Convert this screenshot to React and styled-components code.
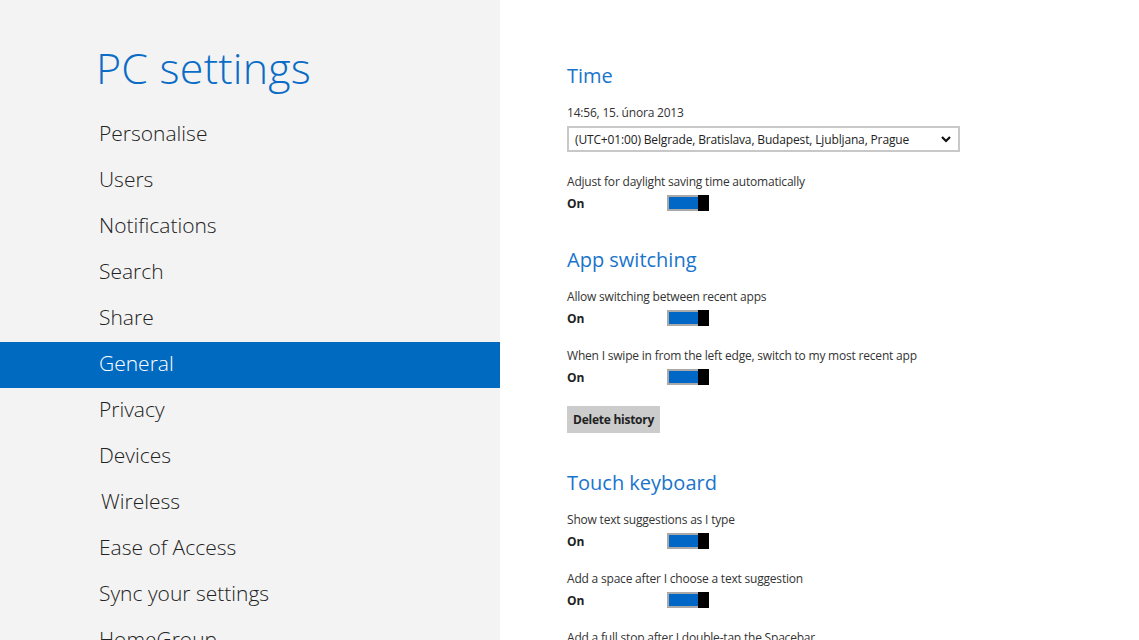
import React from "react";
import styled, { createGlobalStyle } from "styled-components";

const Global = createGlobalStyle`
  html, body {
    margin: 0;
    padding: 0;
    height: 100%;
    overflow: hidden;
  }
  body {
    font-family: "Open Sans", "Noto Sans", "Liberation Sans", sans-serif;
    background: #ffffff;
  }
`;

const Page = styled.div`
  display: flex;
  width: 1139px;
  height: 640px;
  overflow: hidden;
`;

const Side = styled.nav`
  width: 500px;
  flex-shrink: 0;
  background: #f3f3f3;
  display: flex;
  flex-direction: column;
  padding-top: 36px;
`;

const Title = styled.h1`
  margin: 0 0 12px 96px;
  font-size: 43px;
  font-weight: 300;
  color: #0a6cc6;
  line-height: 64px;
  letter-spacing: 0.2px;
`;

const NavItem = styled.div`
  height: 46px;
  box-sizing: border-box;
  display: flex;
  align-items: center;
  padding-left: ${p => p.$indent || 99}px;
  padding-bottom: 4px;
  font-size: 21px;
  font-weight: 300;
  color: ${p => (p.$active ? "#ffffff" : "#222222")};
  background: ${p => (p.$active ? "#006ac1" : "transparent")};
  flex-shrink: 0;
`;

const Main = styled.main`
  flex: 1;
  padding: 61px 0 0 67px;
  display: flex;
  flex-direction: column;
`;

const Section = styled.section`
  display: flex;
  flex-direction: column;
  margin-bottom: ${p => p.$gap || 0}px;
`;

const Heading = styled.h2`
  margin: 0 0 14px;
  font-size: 20px;
  font-weight: 400;
  color: #1a74cc;
  line-height: 30px;
`;

const Label = styled.div`
  font-size: 12px;
  letter-spacing: -0.2px;
  color: #333333;
  line-height: 16px;
  margin-bottom: ${p => p.$mb || 0}px;
`;

const Select = styled.div`
  width: 393px;
  height: 26px;
  box-sizing: border-box;
  border: 2px solid #c8c8c8;
  display: flex;
  align-items: center;
  justify-content: space-between;
  padding: 0 6px 0 6px;
  font-size: 12px;
  letter-spacing: -0.15px;
  color: #222222;
  margin-bottom: 22px;
`;

const ToggleRow = styled.div`
  display: flex;
  align-items: center;
  height: 18px;
  margin-top: 4px;
  margin-bottom: ${p => p.$mb || 0}px;
`;

const State = styled.span`
  width: 100px;
  font-size: 12px;
  font-weight: 700;
  color: #222222;
`;

const Toggle = styled.div`
  width: 42px;
  height: 16px;
  box-sizing: border-box;
  display: flex;
  background: #000000;
`;

const Track = styled.div`
  flex: 1;
  border: 2px solid #a9a9a9;
  border-right: none;
  background: #0067c6;
`;

const Thumb = styled.div`
  width: 11px;
  background: #000000;
`;

const Button = styled.button`
  align-self: flex-start;
  height: 27px;
  padding: 0 6px;
  border: none;
  background: #cccccc;
  font-family: inherit;
  font-size: 12px;
  letter-spacing: -0.25px;
  font-weight: 700;
  color: #222222;
`;

const Chevron = () => (
  <svg width="12" height="10" viewBox="0 0 12 10">
    <path d="M2 3 L6 7 L10 3" fill="none" stroke="#111" strokeWidth="2.2" />
  </svg>
);

const Switch = ({ mb }) => (
  <ToggleRow $mb={mb}>
    <State>On</State>
    <Toggle>
      <Track />
      <Thumb />
    </Toggle>
  </ToggleRow>
);

const navItems = [
  "Personalise",
  "Users",
  "Notifications",
  "Search",
  "Share",
  "General",
  "Privacy",
  "Devices",
  "Wireless",
  "Ease of Access",
  "Sync your settings",
  "HomeGroup",
];

export default function App() {
  return (
    <Page>
      <Global />
      <Side>
        <Title>PC settings</Title>
        {navItems.map(n => (
          <NavItem key={n} $active={n === "General"} $indent={n === "Wireless" ? 101 : 99}>
            {n}
          </NavItem>
        ))}
      </Side>
      <Main>
        <Section $gap={33}>
          <Heading>Time</Heading>
          <Label $mb={5}>14:56, 15. února 2013</Label>
          <Select>
            <span>(UTC+01:00) Belgrade, Bratislava, Budapest, Ljubljana, Prague</span>
            <Chevron />
          </Select>
          <Label>Adjust for daylight saving time automatically</Label>
          <Switch />
        </Section>
        <Section $gap={35}>
          <Heading>App switching</Heading>
          <Label>Allow switching between recent apps</Label>
          <Switch mb={21} />
          <Label>When I swipe in from the left edge, switch to my most recent app</Label>
          <Switch mb={20} />
          <Button>Delete history</Button>
        </Section>
        <Section>
          <Heading>Touch keyboard</Heading>
          <Label>Show text suggestions as I type</Label>
          <Switch mb={21} />
          <Label>Add a space after I choose a text suggestion</Label>
          <Switch mb={21} />
          <Label>Add a full stop after I double-tap the Spacebar</Label>
        </Section>
      </Main>
    </Page>
  );
}
